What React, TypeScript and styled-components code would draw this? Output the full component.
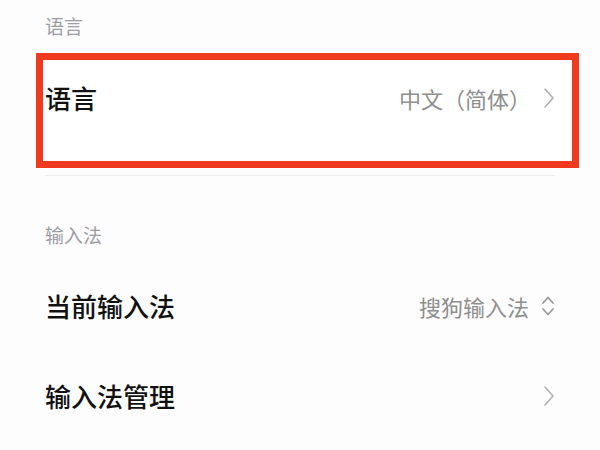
import * as React from "react";
import styled, { createGlobalStyle } from "styled-components";

const GlobalStyle = createGlobalStyle`
  html, body {
    margin: 0;
    padding: 0;
    background: #ffffff;
  }
  body {
    font-family: "Noto Sans CJK SC", "Noto Sans", sans-serif;
  }
`;

const Page = styled.div`
  width: 600px;
  height: 450px;
  overflow: hidden;
  box-sizing: border-box;
  padding: 13px 45px 0 45px;
  background: #fdfdfd;
`;

const SectionTitle = styled.div<{ $gap?: number }>`
  font-size: 19px;
  line-height: 26px;
  color: #9c9ca4;
  margin-top: ${(p) => p.$gap ?? 0}px;
`;

const Highlight = styled.div`
  margin: 14px -24px 0 -9px;
  border: 7px solid #ef3a1e;
  padding: 20px 17px 45px 2px;
  background: #fff;
`;

const Row = styled.div<{ $height?: number }>`
  display: flex;
  align-items: center;
  justify-content: space-between;
  height: ${(p) => (p.$height ? `${p.$height}px` : "auto")};
`;

const Label = styled.div`
  font-size: 26px;
  line-height: 36px;
  font-weight: 500;
  color: #111;
`;

const Value = styled.div`
  display: flex;
  align-items: center;
  gap: 12px;
  font-size: 22px;
  line-height: 30px;
  color: #8e8e8e;
`;

const Divider = styled.div`
  height: 1px;
  background: #ececec;
  margin-top: 7px;
`;

const RowList = styled.div`
  margin-top: 13px;
`;

function Chevron() {
  return (
    <svg width="12" height="22" viewBox="0 0 12 22" fill="none">
      <path d="M2 2 L10 11 L2 20" stroke="#b0b0b0" strokeWidth="1.6" strokeLinecap="round" strokeLinejoin="round" />
    </svg>
  );
}

function UpDown() {
  return (
    <svg width="14" height="24" viewBox="0 0 14 24" fill="none">
      <path d="M2 9 L7 3.5 L12 9" stroke="#9a9a9a" strokeWidth="1.8" strokeLinecap="round" strokeLinejoin="round" />
      <path d="M2 15 L7 20.5 L12 15" stroke="#9a9a9a" strokeWidth="1.8" strokeLinecap="round" strokeLinejoin="round" />
    </svg>
  );
}

export default function App() {
  return (
    <>
      <GlobalStyle />
      <Page>
        <SectionTitle>语言</SectionTitle>
        <Highlight>
          <Row>
            <Label>语言</Label>
            <Value>
              中文（简体）
              <Chevron />
            </Value>
          </Row>
        </Highlight>
        <Divider />

        <SectionTitle $gap={46}>输入法</SectionTitle>
        <RowList>
          <Row $height={90}>
            <Label>当前输入法</Label>
            <Value>
              搜狗输入法
              <UpDown />
            </Value>
          </Row>
          <Row $height={90}>
            <Label>输入法管理</Label>
            <Value>
              <Chevron />
            </Value>
          </Row>
        </RowList>
      </Page>
    </>
  );
}
